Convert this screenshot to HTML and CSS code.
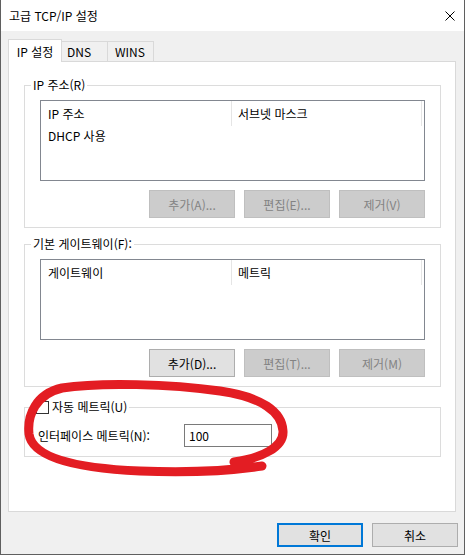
FILE: index.html
```html
<!DOCTYPE html>
<html lang="ko">
<head>
<meta charset="utf-8">
<title>고급 TCP/IP 설정</title>
<link rel="stylesheet" href="styles.css">
</head>
<body>
<div class="window">
  <div class="titlebar">
    <span class="title">고급 TCP/IP 설정</span>
    <svg class="close" width="10" height="10" viewBox="0 0 10 10"><path d="M0.5 0.5 L9.5 9.5 M9.5 0.5 L0.5 9.5" stroke="#000" stroke-width="1" fill="none"/></svg>
  </div>
  <div class="client">
    <div class="tabs">
      <div class="tab active">IP 설정</div>
      <div class="tab tab-dns">DNS</div>
      <div class="tab tab-wins">WINS</div>
    </div>
    <div class="panel">
      <fieldset class="group g-ip">
        <legend>IP 주소(R)</legend>
        <div class="gbody">
          <div class="list">
            <div class="list-head">
              <div class="col c1">IP 주소</div>
              <div class="col c2">서브넷 마스크</div>
            </div>
            <div class="list-row"><div class="cell">DHCP 사용</div></div>
          </div>
          <div class="btnrow">
            <button class="btn" disabled>추가(A)...</button>
            <button class="btn" disabled>편집(E)...</button>
            <button class="btn" disabled>제거(V)</button>
          </div>
        </div>
      </fieldset>
      <fieldset class="group g-gw">
        <legend>기본 게이트웨이(F):</legend>
        <div class="gbody">
          <div class="list">
            <div class="list-head">
              <div class="col c1">게이트웨이</div>
              <div class="col c2">메트릭</div>
            </div>
          </div>
          <div class="btnrow">
            <button class="btn">추가(D)...</button>
            <button class="btn" disabled>편집(T)...</button>
            <button class="btn" disabled>제거(M)</button>
          </div>
        </div>
      </fieldset>
      <fieldset class="group g-metric">
        <legend class="check-legend"><span class="checkbox"></span><span>자동 메트릭(U)</span></legend>
        <div class="gbody metric-body">
          <span class="metric-label">인터페이스 메트릭(N):</span>
          <div class="textbox">100</div>
        </div>
      </fieldset>
    </div>
    <div class="footer">
      <button class="btn dlg primary">확인</button>
      <button class="btn dlg">취소</button>
    </div>
  </div>
  <svg class="annotation" width="465" height="555" viewBox="0 0 465 555">
    <path d="M 234 462 C 262 458, 284 447, 283 431 C 282 412, 262 397, 220 391 C 170 384, 100 382, 62 388 C 36 394, 27 415, 29 434 C 32 456, 70 468, 140 471 C 190 473, 235 470, 262 466" fill="none" stroke="#e31d23" stroke-width="9" stroke-linecap="round" stroke-linejoin="round"/>
  </svg>
</div>
</body>
</html>
```

FILE: styles.css
```css
* { box-sizing: border-box; }

body {
  margin: 0;
  font-family: "Noto Sans CJK KR", "Noto Sans", sans-serif;
  font-size: 12px;
  line-height: 16px;
  color: #000;
  background: #fff;
}

.window {
  position: relative;
  width: 465px;
  height: 555px;
  border: 1px solid #5f5f5f;
  border-top: none;
  display: flex;
  flex-direction: column;
  background: #f0f0f0;
  overflow: hidden;
}

.titlebar {
  flex: none;
  height: 31px;
  background: #fff;
  display: flex;
  align-items: center;
  justify-content: space-between;
  padding: 0 9px 0 8px;
}

.title { font-size: 12px; }

.close { display: block; }

.client {
  flex: 1;
  display: flex;
  flex-direction: column;
  padding: 8px 6px 7px 7px;
}

.tabs {
  display: flex;
  align-items: flex-end;
  flex: none;
}

.tab {
  height: 20px;
  border: 1px solid #d9d9d9;
  border-bottom: none;
  background: #f0f0f0;
  margin-left: -1px;
  padding: 2px 0 0 5px;
  line-height: 16px;
}

.tab.active {
  position: relative;
  z-index: 1;
  height: 23px;
  width: 54px;
  margin-left: 0;
  margin-bottom: -1px;
  background: #fff;
  text-align: center;
  padding: 4px 0 0;
}

.tab-dns { width: 47px; padding-left: 5px; }
.tab-wins { width: 47px; padding-left: 7px; }

.panel {
  flex: 1;
  background: #fff;
  border: 1px solid #d9d9d9;
  margin-right: 2px;
  padding: 15px 0 0 15px;
}

.group {
  width: 417px;
  min-width: 0;
  margin: 0;
  padding: 0;
  border: 1px solid #dcdcdc;
}

.group legend {
  padding: 0 2px;
  margin-left: 6px;
  line-height: 16px;
}

.g-gw { margin-top: 8px; }
.g-metric { margin-top: 12px; }

.gbody {
  padding: 7px 15px 9px 15px;
}

.list {
  height: 81px;
  border: 1px solid #828790;
  background: #fff;
}

.list-head {
  display: flex;
  height: 25px;
}

.col {
  height: 25px;
  border-right: 1px solid #e5e5e5;
  line-height: 25px;
}

.c1 { width: 191px; padding-left: 7px; }
.c2 { width: 190px; padding-left: 6px; }

.list-row {
  height: 20px;
  line-height: 20px;
  padding-left: 7px;
}

.btnrow {
  display: flex;
  justify-content: flex-end;
  gap: 9px;
  margin-top: 9px;
}

.btn {
  width: 86px;
  height: 28px;
  padding: 0;
  font-family: inherit;
  font-size: 12px;
  color: #000;
  background: #e1e1e1;
  border: 1px solid #adadad;
  border-radius: 0;
}

.btn:disabled {
  background: #cccccc;
  border-color: #bfbfbf;
  color: #838383;
}

.check-legend {
  display: flex;
  align-items: center;
  gap: 3px;
}

.group .check-legend { margin-left: 9px; }

.checkbox {
  display: block;
  width: 13px;
  height: 13px;
  border: 1px solid #333;
  background: #fff;
}

.metric-body {
  display: flex;
  align-items: center;
  padding: 9px 0 9px 13px;
}

.metric-label { width: 146px; }

.textbox {
  width: 88px;
  height: 23px;
  border: 1px solid #7a7a7a;
  background: #fff;
  padding-left: 4px;
  line-height: 21px;
}

.footer {
  flex: none;
  display: flex;
  justify-content: flex-end;
  gap: 9px;
  margin-top: 11px;
}

.btn.dlg { height: 24px; }

.btn.primary { border: 2px solid #0078d7; }

.annotation {
  position: absolute;
  left: -1px;
  top: 0;
  pointer-events: none;
}
```
